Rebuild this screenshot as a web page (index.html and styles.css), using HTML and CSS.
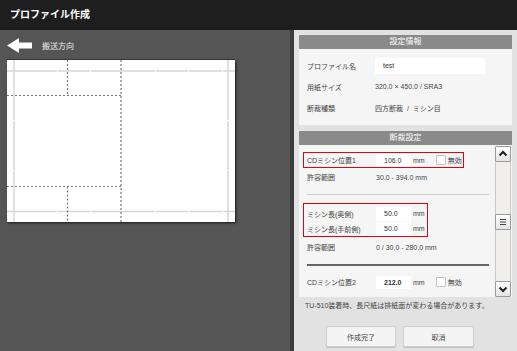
FILE: index.html
```html
<!DOCTYPE html>
<html lang="ja">
<head>
    <meta charset="UTF-8">
    <meta name="viewport" content="width=device-width, initial-scale=1.0">
    <title>プロファイル作成</title>
    <link rel="stylesheet" href="styles.css">
</head>
<body>
    <header class="topbar">プロファイル作成</header>
    <div class="main">
        <section class="preview">
            <div class="direction">
                <svg class="arrow" width="25" height="15" viewBox="0 0 25 15">
                    <path d="M0 7.5 L12 0 L12 4.5 L25 4.5 L25 10.5 L12 10.5 L12 15 Z" fill="#fff"/>
                </svg>
                <span>搬送方向</span>
            </div>
            <svg class="sheet" width="228" height="162" viewBox="0 0 228 162">
                <rect width="228" height="162" fill="#fff"/>
                <g stroke="#d6d6d6" stroke-width="1.5">
                    <line x1="7" y1="0" x2="7" y2="162"/>
                    <line x1="221" y1="0" x2="221" y2="162"/>
                    <line x1="0" y1="11" x2="228" y2="11"/>
                    <line x1="0" y1="151.5" x2="228" y2="151.5"/>
                </g>
                <g stroke="#fff" stroke-width="2">
                    <line x1="50" y1="11" x2="51" y2="11"/>
                    <line x1="83" y1="11" x2="84" y2="11"/>
                    <line x1="148" y1="11" x2="149" y2="11"/>
                    <line x1="181" y1="11" x2="182" y2="11"/>
                    <line x1="215" y1="11" x2="216" y2="11"/>
                    <line x1="50" y1="151.5" x2="51" y2="151.5"/>
                    <line x1="83" y1="151.5" x2="84" y2="151.5"/>
                    <line x1="148" y1="151.5" x2="149" y2="151.5"/>
                    <line x1="181" y1="151.5" x2="182" y2="151.5"/>
                    <line x1="215" y1="151.5" x2="216" y2="151.5"/>
                    <line x1="7" y1="60" x2="7" y2="61"/>
                    <line x1="7" y1="110" x2="7" y2="111"/>
                    <line x1="221" y1="60" x2="221" y2="61"/>
                    <line x1="221" y1="110" x2="221" y2="111"/>
                </g>
                <g stroke="#777" stroke-width="1.2" stroke-dasharray="2 2" fill="none">
                    <line x1="60.5" y1="0" x2="60.5" y2="35.5"/>
                    <line x1="114" y1="0" x2="114" y2="162"/>
                    <line x1="0" y1="35.5" x2="114" y2="35.5"/>
                    <line x1="0" y1="126.5" x2="114" y2="126.5"/>
                    <line x1="60.5" y1="126.5" x2="60.5" y2="162"/>
                </g>
            </svg>
        </section>

        <section class="settings">
            <div class="panel">
                <div class="panel-title">設定情報</div>
                <div class="panel-body info">
                    <div class="row">
                        <span class="label">プロファイル名</span>
                        <span class="field">test</span>
                    </div>
                    <div class="row">
                        <span class="label">用紙サイズ</span>
                        <span>320.0 × 450.0 / SRA3</span>
                    </div>
                    <div class="row">
                        <span class="label">断裁種類</span>
                        <span>四方断裁 &nbsp;/&nbsp; ミシン目</span>
                    </div>
                </div>
            </div>

            <div class="panel cut">
                <div class="panel-title">断裁設定</div>
                <div class="panel-body scroll">
                    <div class="cut-content">
                        <div class="hl box-cd1">
                            <div class="crow">
                                <span class="clabel">CDミシン位置1</span>
                                <span class="num">106.0</span>
                                <span class="unit">mm</span>
                                <span class="check"></span>
                                <span>無効</span>
                            </div>
                        </div>
                        <div class="crow plain range1">
                            <span class="clabel">許容範囲</span>
                            <span>30.0 - 394.0 mm</span>
                        </div>
                        <div class="sep"></div>
                        <div class="hl box-len">
                            <div class="crow tall">
                                <span class="clabel">ミシン長(奥側)</span>
                                <span class="num">50.0</span>
                                <span class="unit">mm</span>
                            </div>
                            <div class="crow tall">
                                <span class="clabel">ミシン長(手前側)</span>
                                <span class="num">50.0</span>
                                <span class="unit">mm</span>
                            </div>
                        </div>
                        <div class="crow plain range2">
                            <span class="clabel">許容範囲</span>
                            <span>0 / 30.0 - 280.0 mm</span>
                        </div>
                        <div class="sep dark"></div>
                        <div class="crow plain cd2">
                            <span class="clabel">CDミシン位置2</span>
                            <span class="num bold">212.0</span>
                            <span class="unit">mm</span>
                            <span class="check"></span>
                            <span>無効</span>
                        </div>
                    </div>
                    <div class="scrollbar">
                        <div class="sb-btn">
                            <svg width="14" height="14" viewBox="0 0 14 14"><path d="M3.5 8.5 L7 5 L10.5 8.5" stroke="#222" stroke-width="2" fill="none"/></svg>
                        </div>
                        <div class="sb-track">
                            <div class="sb-thumb">
                                <svg width="14" height="14" viewBox="0 0 14 14"><path d="M4 4.5 H10 M4 7 H10 M4 9.5 H10" stroke="#444" stroke-width="1.2"/></svg>
                            </div>
                        </div>
                        <div class="sb-btn">
                            <svg width="14" height="14" viewBox="0 0 14 14"><path d="M3.5 5.5 L7 9 L10.5 5.5" stroke="#222" stroke-width="2" fill="none"/></svg>
                        </div>
                    </div>
                </div>
            </div>

            <p class="note">TU-510装着時、長尺紙は排紙面が変わる場合があります。</p>
            <div class="actions">
                <button class="btn done">作成完了</button>
                <button class="btn cancel">取消</button>
            </div>
        </section>
    </div>
</body>
</html>
```

FILE: styles.css
```css
* {
    box-sizing: border-box;
}
body {
    margin: 0;
    width: 517px;
    height: 351px;
    overflow: hidden;
    font-family: "Liberation Sans", "Noto Sans CJK JP", sans-serif;
    font-size: 7px;
    color: #444;
}
.topbar {
    height: 30px;
    line-height: 30px;
    padding-left: 10px;
    background-color: #1e1e1e;
    color: #fff;
    font-size: 10px;
    font-weight: bold;
}
.main {
    display: flex;
    height: 321px;
}

/* left: sheet preview */
.preview {
    width: 290px;
    padding: 8px 7px;
    background-color: #555;
}
.direction {
    display: flex;
    align-items: center;
    height: 15px;
    color: #eee;
    font-size: 8px;
}
.direction span {
    margin-left: 10px;
}
.arrow {
    display: block;
}
.sheet {
    display: block;
    margin-top: 7px;
    box-shadow: 1px 1px 2px rgba(0, 0, 0, 0.7), 0 -1px 0 #3a3a3a;
}

/* right: settings */
.settings {
    flex: 1;
    padding: 5px 5px 0 5px;
    background-color: #e2e2e2;
    border-left: 4px solid #3c3c3c;
}
.panel-title {
    height: 14px;
    line-height: 14px;
    background-color: #8a8a8a;
    color: #fff;
    font-size: 8px;
    text-align: center;
}
.panel-body {
    background-color: #f5f5f5;
}
.info {
    padding: 6px 0 7px 8px;
}
.row {
    display: flex;
    align-items: center;
    height: 21px;
}
.label {
    width: 68px;
}
.field {
    width: 110px;
    height: 16px;
    line-height: 16px;
    padding-left: 8px;
    background-color: #fff;
    color: #333;
}
.cut {
    margin-top: 6px;
}
.scroll {
    display: flex;
    height: 152px;
    overflow: hidden;
}
.cut-content {
    flex: 1;
    padding: 7px 0 0 4px;
}
.hl {
    border: 1px solid #e60012;
}
.box-cd1 {
    width: 161px;
    padding: 0 3px;
}
.box-len {
    width: 125px;
    margin-top: 8px;
    padding: 2px 3px 0;
}
.crow {
    display: flex;
    align-items: center;
    height: 14px;
    white-space: nowrap;
}
.crow.tall {
    height: 15px;
}
.plain {
    padding-left: 4px;
}
.clabel {
    width: 69px;
    flex-shrink: 0;
}
.num {
    flex-shrink: 0;
    width: 35px;
    height: 13px;
    line-height: 13px;
    padding-left: 8px;
    background-color: #fff;
    color: #333;
}
.tall .num {
    height: 14px;
    line-height: 14px;
}
.bold {
    font-weight: bold;
}
.unit {
    margin-left: 2px;
}
.check {
    flex-shrink: 0;
    width: 10px;
    height: 10px;
    margin: 0 2px 0 11px;
    background-color: #fff;
    border: 1px solid #c4c4c4;
    border-radius: 1px;
}
.range1 {
    margin-top: 2px;
}
.range2 {
    margin-top: 3px;
}
.cd2 {
    margin-top: 9px;
}
.sep {
    height: 1px;
    margin: 10px 6px 0 4px;
    background-color: #ccc;
}
.sep.dark {
    height: 2px;
    background-color: #666;
}

.scrollbar {
    display: flex;
    flex-direction: column;
    width: 16px;
    margin: 1px 1px 0 0;
}
.sb-btn,
.sb-thumb {
    display: flex;
    align-items: center;
    justify-content: center;
    height: 16px;
    background: linear-gradient(#fff, #e4e4e4);
    border: 1px solid #9a9a9a;
    border-radius: 1px;
}
.sb-track {
    flex: 1;
    display: flex;
    flex-direction: column;
    justify-content: center;
    background-color: #f1efec;
    border-left: 1px solid #c8c8c8;
    border-right: 1px solid #c8c8c8;
}
.sb-track .sb-thumb {
    margin: 0 -1px;
}

.note {
    margin: 4px 0 0 6px;
    line-height: 10px;
    color: #444;
}
.actions {
    display: flex;
    gap: 7px;
    margin-top: 15px;
    padding-left: 27px;
}
.btn {
    width: 70px;
    height: 21px;
    padding: 0;
    font-family: inherit;
    font-size: 7px;
    color: #444;
    background-color: #f4f4f4;
    border: 1px solid #cfcfcf;
    border-radius: 2px;
    box-shadow: 0 1px 1px rgba(0, 0, 0, 0.15);
}
.btn.cancel {
    width: 71px;
}
```
